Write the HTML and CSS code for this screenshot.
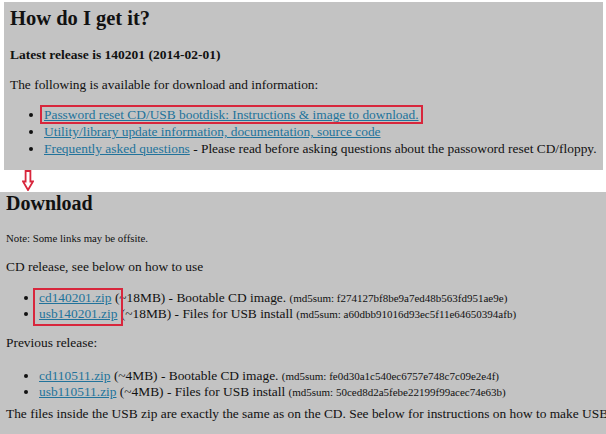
FILE: index.html
```html
<!DOCTYPE html>
<html>
<head>
    <title>Offline NT Password &amp; Registry Editor - Download</title>
    <meta charset="UTF-8">
<link rel="stylesheet" href="styles.css">
</head>
<body>
    <div class="panel top">
        <h1>How do I get it?</h1>
        <p class="latest">Latest release is 140201 (2014-02-01)</p>
        <p class="intro">The following is available for download and information:</p>
        <ul class="info">
            <li><span class="mark"><a href="#">Password reset CD/USB bootdisk: Instructions &amp; image to download.</a></span></li>
            <li><a href="#">Utility/library update information, documentation, source code</a></li>
            <li><a href="#">Frequently asked questions</a> - Please read before asking questions about the passoword reset CD/floppy.</li>
        </ul>
    </div>

    <div class="gap">
        <svg class="arrow" width="12" height="21" viewBox="0 0 12 21">
            <path d="M3.6 1 H8.4 V11.5 H11 L6 20 L1 11.5 H3.6 Z" fill="none" stroke="#d8263c" stroke-width="1.8"/>
        </svg>
    </div>

    <div class="panel bottom">
        <h1>Download</h1>
        <p class="note">Note: Some links may be offsite.</p>
        <p class="cd">CD release, see below on how to use</p>
        <div class="files">
            <div class="box"></div>
            <ul>
                <li><a href="#">cd140201.zip</a> (~18MB) - Bootable CD image. <small>(md5sum: f274127bf8be9a7ed48b563fd951ae9e)</small></li>
                <li><a href="#">usb140201.zip</a> (~18MB) - Files for USB install <small>(md5sum: a60dbb91016d93ec5f11e64650394afb)</small></li>
            </ul>
        </div>
        <p class="prev">Previous release:</p>
        <ul class="old">
            <li><a href="#">cd110511.zip</a> (~4MB) - Bootable CD image. <small>(md5sum: fe0d30a1c540ec6757e748c7c09e2e4f)</small></li>
            <li><a href="#">usb110511.zip</a> (~4MB) - Files for USB install <small>(md5sum: 50ced8d2a5febe22199f99acec74e63b)</small></li>
        </ul>
        <p class="last">The files inside the USB zip are exactly the same as on the CD. See below for instructions on how to make USB drive.</p>
    </div>
</body>
</html>
```

FILE: styles.css
```css
body {
  margin: 0;
  background-color: #fff;
  font-family: "Liberation Serif", "Times New Roman", serif;
  font-size: 13.4px;
  color: #111;
  overflow: hidden;
}

a {
  color: #22739b;
}

/* Grey page blocks */
.panel {
  background-color: #c3c3c3;
}

.top {
  margin: 2px 3px 0 4px;
  padding: 3px 6px 0 6px;
  height: 168px;
  box-sizing: border-box;
}

.bottom {
  padding: 0 6px;
  height: 242px;
  box-sizing: border-box;
  white-space: nowrap;
  overflow: hidden;
}

h1 {
  font-size: 20.5px;
  line-height: 26px;
  margin: 0;
}

.bottom h1 {
  font-size: 20px;
  line-height: 22px;
}

p {
  margin: 0;
  line-height: 18px;
}

.latest {
  font-weight: bold;
  font-size: 13.5px;
  margin-top: 15px;
}

.intro {
  margin-top: 12px;
}

ul {
  margin: 0;
  line-height: 16px;
  padding-left: 33px;
}

.info {
  margin-top: 12px;
  padding-left: 34px;
  line-height: 17px;
}

/* Red highlight frames */
.mark {
  border: 2px solid #d8263c;
  padding: 0 2px;
  margin-left: -4px;
}

.gap {
  height: 22px;
  padding-left: 22px;
}

.arrow {
  display: block;
}

.note {
  font-size: 10.8px;
  line-height: 14px;
  margin-top: 17px;
}

.cd {
  margin-top: 13px;
}

.files {
  position: relative;
  margin-top: 14px;
}

.box {
  position: absolute;
  left: 27px;
  top: -2px;
  width: 90px;
  height: 38px;
  box-sizing: border-box;
  border: 2px solid #d8263c;
}

small {
  font-size: 11px;
}

.prev {
  margin-top: 12px;
}

.old {
  margin-top: 16px;
}

.last {
  margin-top: 5px;
}
```
